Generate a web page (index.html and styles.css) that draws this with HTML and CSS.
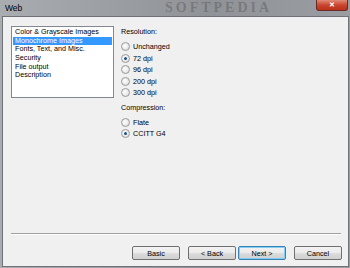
FILE: index.html
```html
<!DOCTYPE html>
<html lang="en">
<head>
    <meta charset="UTF-8">
    <title>Web</title>
    <link rel="stylesheet" href="styles.css">
</head>
<body>
    <div class="window">
        <div class="titlebar">
            <span class="title">Web</span>
            <span class="watermark">SOFTPEDIA</span>
            <div class="close">&#x2715;</div>
        </div>
        <div class="frame">
            <div class="main">
                <ul class="listbox">
                    <li>Color &amp; Grayscale Images</li>
                    <li class="selected">Monochrome Images</li>
                    <li>Fonts, Text, and Misc.</li>
                    <li>Security</li>
                    <li>File output</li>
                    <li>Description</li>
                </ul>
                <div class="options">
                    <div class="group-label">Resolution:</div>
                    <div class="radio"><span class="dot"></span>Unchanged</div>
                    <div class="radio"><span class="dot checked"></span>72 dpi</div>
                    <div class="radio"><span class="dot"></span>96 dpi</div>
                    <div class="radio"><span class="dot"></span>200 dpi</div>
                    <div class="radio"><span class="dot"></span>300 dpi</div>
                    <div class="group-label second">Compression:</div>
                    <div class="radio"><span class="dot"></span>Flate</div>
                    <div class="radio"><span class="dot checked"></span>CCITT G4</div>
                </div>
            </div>
            <div class="separator"></div>
            <div class="buttons">
                <button>Basic</button>
                <button class="gap">&lt; Back</button>
                <button class="default">Next &gt;</button>
                <button class="gap">Cancel</button>
            </div>
        </div>
    </div>
</body>
</html>
```

FILE: styles.css
```css
body {
    margin: 0;
    background: #8c8f93;
    font-family: "Liberation Sans", Arial, sans-serif;
    font-size: 7.2px;
    color: #000;
}
.window {
    width: 350px;
    height: 268px;
    display: flex;
    flex-direction: column;
    background: linear-gradient(90deg, #a9adb1, #8f9398 60%, #9a9ea2);
}
.titlebar {
    position: relative;
    height: 16px;
}
.title {
    position: absolute;
    left: 5px;
    top: 3px;
    font-size: 8.5px;
}
.watermark {
    position: absolute;
    left: 165px;
    top: 1px;
    line-height: 14px;
    font-family: "Liberation Serif", serif;
    font-size: 14px;
    font-weight: bold;
    letter-spacing: 3px;
    color: rgba(50, 50, 50, 0.3);
}
.close {
    position: absolute;
    right: 2px;
    top: 0;
    width: 30px;
    height: 10px;
    background: linear-gradient(#e08a78, #c9452d 50%, #b8321d);
    border: 1px solid #6e2a22;
    border-top: none;
    border-radius: 0 0 3px 3px;
    color: #fff;
    font-size: 7px;
    font-weight: bold;
    text-align: center;
    line-height: 9px;
}
.frame {
    margin: 0 1px 1px 2px;
    flex: 1;
    background: #f0f0f0;
    border: 1px solid #6f7378;
    padding: 9px 6px 0 8px;
    display: flex;
    flex-direction: column;
}
.main {
    display: flex;
    gap: 7px;
    height: 207px;
}
.listbox {
    list-style: none;
    margin: 0;
    padding: 1px 1px 3px;
    width: 99px;
    height: 66px;
    background: #fff;
    border: 1px solid #828790;
    box-sizing: content-box;
}
.listbox li {
    height: 8.7px;
    line-height: 8.7px;
    padding-left: 2px;
    white-space: nowrap;
}
.listbox .selected {
    background: #3399ff;
    color: #fff;
}
.options {
    display: flex;
    flex-direction: column;
    padding-top: 1px;
}
.group-label {
    height: 10px;
    line-height: 10px;
    margin-bottom: 4px;
}
.group-label.second {
    margin-top: 4px;
    margin-bottom: 4px;
}
.radio {
    display: flex;
    align-items: center;
    gap: 3px;
    height: 11.5px;
}
.dot {
    width: 7px;
    height: 7px;
    border-radius: 50%;
    border: 1px solid #9a9a9a;
    background: radial-gradient(circle at 40% 40%, #fff, #d8d8d8);
    position: relative;
}
.dot.checked::after {
    content: "";
    position: absolute;
    left: 2px;
    top: 2px;
    width: 3px;
    height: 3px;
    border-radius: 50%;
    background: #1b4f8c;
}
.separator {
    height: 1px;
    background: #a0a0a0;
    border-bottom: 1px solid #fff;
    margin-right: 1px;
}
.buttons {
    display: flex;
    justify-content: flex-end;
    gap: 2px;
    margin-top: 11px;
}
.buttons button {
    width: 48px;
    height: 14px;
    padding: 0;
    font-family: inherit;
    font-size: 7.2px;
    background: linear-gradient(#f2f2f2, #ebebeb 50%, #dddddd 51%, #cfcfcf);
    border: 1px solid #707070;
    border-radius: 2px;
}
.buttons button.gap {
    margin-left: 6px;
}
.buttons button.default {
    border-color: #3c7fb1;
    box-shadow: inset 0 0 0 1px #7fd0f6;
}
```
